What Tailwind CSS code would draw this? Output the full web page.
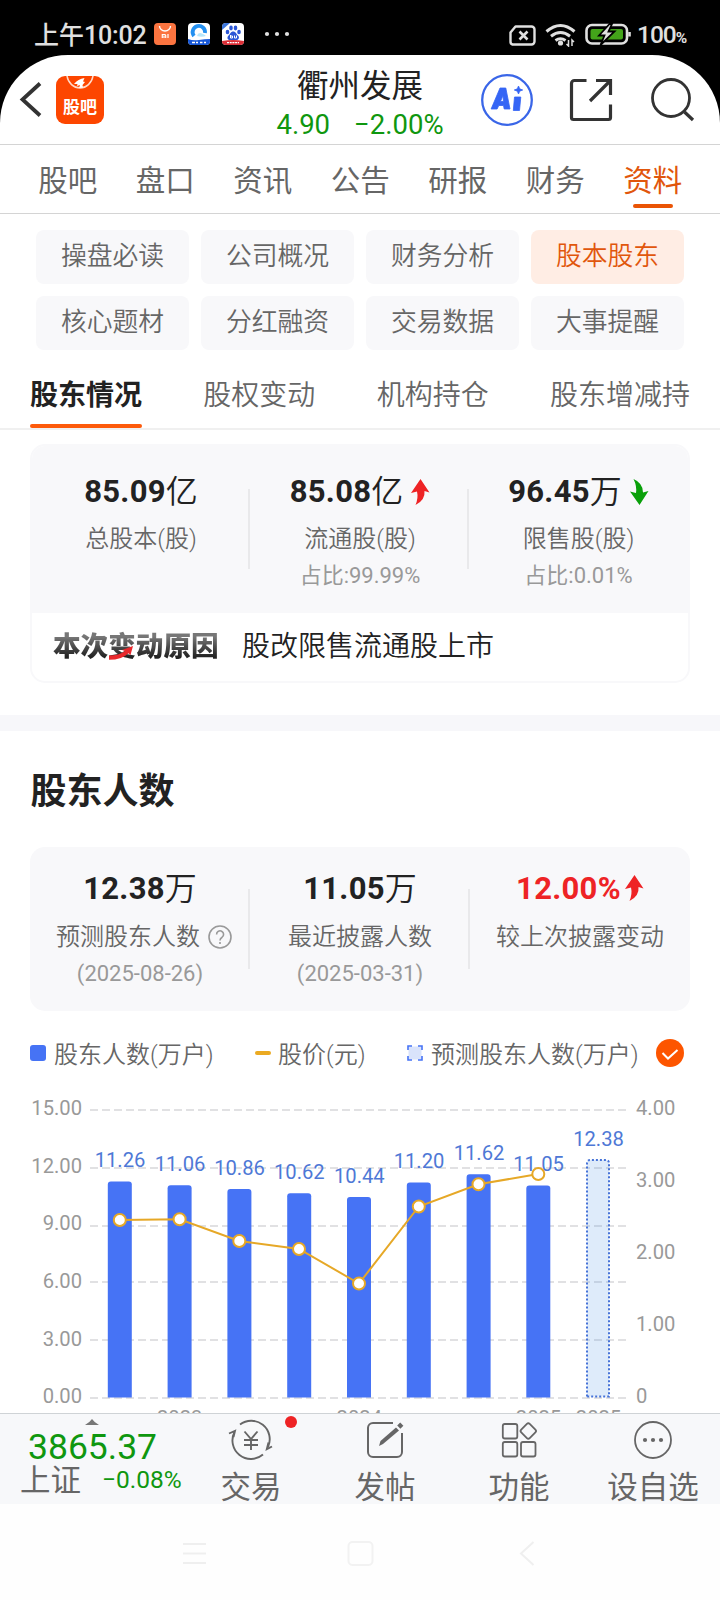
<!DOCTYPE html>
<html lang="zh-CN">
<head>
<meta charset="utf-8">
<title>衢州发展 - 股本股东</title>
<script src="https://cdn.jsdelivr.net/npm/@tailwindcss/browser@4"></script>
</head>
<body class="bg-black">
<div class="w-[720px] h-[1600px] overflow-hidden flex flex-col font-['Roboto','Noto_Sans_CJK_SC',sans-serif] text-[#666]">

  <!-- status bar -->
  <div class="h-[55px] shrink-0 bg-black flex items-start pt-[15px] pl-[34px] text-[#e0e0e0]">
    <div class="w-[120px] h-[40px] leading-[41px] whitespace-nowrap flex"><span class="text-[25px] font-medium">上午</span><span class="text-[25px] font-medium tracking-[-0.2px]">10:02</span></div>
    <svg class="mt-[8px] w-[22px] h-[22px]" viewBox="0 0 22 22"><rect width="22" height="22" rx="4" fill="#fb7440"/><path d="M5.5 3a5.5 5 0 0 0 11 0" fill="none" stroke="#fff" stroke-width="1.4"/><path d="M8.300 15v-3.500h2.400a1 1 0 0 1 1 1v2.500M10 12.500v2.500M14 11v4" fill="none" stroke="#fff" stroke-width="1.200"/></svg>
    <svg class="mt-[8px] ml-[12px] w-[22px] h-[22px]" viewBox="0 0 22 22"><rect width="22" height="22" rx="4" fill="#fff"/><path d="M0 16q5 2 11 1t11-1v2a4 4 0 0 1-4 4H4a4 4 0 0 1-4-4z" fill="#1657d8"/><path d="M6 13a6.200 6.200 0 1 1 11-3" fill="none" stroke="#2490f0" stroke-width="3.800"/><path d="M9 13q1-4 5-2.500 3 1 4 2.500-4 1.500-9 0z" fill="#b6e6fb"/><path d="M4 19.500h3M8 19.500h2M12 19.500h2.500M16 19.500h2" stroke="#fff" stroke-width="1.600"/></svg>
    <svg class="mt-[8px] ml-[12px] w-[22px] h-[22px]" viewBox="0 0 22 22"><rect width="22" height="22" rx="4" fill="#fff"/><path d="M0 7V4a4 4 0 0 1 4-4h4z" fill="#3c76dc"/><g fill="#2b56d6"><ellipse cx="5.500" cy="9" rx="1.800" ry="2.300"/><ellipse cx="9" cy="5" rx="1.800" ry="2.400"/><ellipse cx="13.500" cy="5" rx="1.800" ry="2.400"/><ellipse cx="17" cy="9" rx="1.800" ry="2.300"/><path d="M11.200 8.500c2.500 0 3 2.500 4.800 4 2 2 .5 5-2 4.500h-5.500c-3 .5-4-2.500-2-4.500 1.800-1.500 2.200-4 4.700-4z"/></g><path d="M0 18q11-2 22 0a4 4 0 0 1-4 4H4a4 4 0 0 1-4-4z" fill="#dc3038"/><path d="M8.500 12v3h2v-2h-2M12.500 12.500v2.500h2v-2.500" fill="none" stroke="#fff" stroke-width="1"/><path d="M5 19.700h12" stroke="#fff" stroke-width="1.300" stroke-dasharray="2 .7"/></svg>
    <svg class="mt-[15px] ml-[20px] w-[27px] h-[8px]" viewBox="0 0 27 8" fill="#e0e0e0"><circle cx="3" cy="4" r="2.100"/><circle cx="13" cy="4" r="2.100"/><circle cx="23" cy="4" r="2.100"/></svg>
    <svg class="ml-[217px] mt-[8px] w-[124px] h-[24px]" viewBox="508 23 124 24" fill="none">
      <path d="M515.500 26.500h16a3 3 0 0 1 3 3v12a3 3 0 0 1-3 3h-19a3 3 0 0 1-2-3v-9z" stroke="#e0e0e0" stroke-width="2.400" stroke-linejoin="round"/><path d="M519.500 31.500l8 8m0-8l-8 8" stroke="#e0e0e0" stroke-width="2.600"/>
      <g stroke="#e0e0e0" stroke-width="3"><path d="M546.500 31.500q14-12 28 0"/><path d="M551 36.200q9.500-7.500 19 0"/><path d="M555.500 40.500q5-3.500 10 0"/></g><circle cx="560.500" cy="43" r="2.600" fill="#e0e0e0"/>
      <path d="M568.500 40v6l-2-2M572 46v-6l2 2" stroke="#e0e0e0" stroke-width="1.500"/>
      <rect x="586.500" y="25" width="40.500" height="18.500" rx="5.500" stroke="#e0e0e0" stroke-width="2.600"/><rect x="590.500" y="29" width="32.500" height="10.500" rx="2" fill="#43a41a"/><path d="M609.500 24l-10.500 11.500h5.500l-4 9.500 14-13.500h-6l3.500-7.500z" fill="#e0e0e0" stroke="#000" stroke-width="1.800"/><path d="M629.500 32v4.500" stroke="#e0e0e0" stroke-width="2.600"/>
    </svg>
    <div class="ml-[5px] h-[40px] leading-[40px] text-[24.500px] font-medium whitespace-nowrap tracking-[-1px]">100<span class="text-[15.500px] font-bold">%</span></div>
  </div>

  <!-- app -->
  <div class="bg-white rounded-t-[68px] flex flex-col shrink-0 h-[1358px] overflow-hidden">
    <div class="h-[90px] shrink-0 flex border-b border-[#d4d4d4]">
      <div class="w-[240px] flex items-start pl-[18px] pt-[21px]">
        <svg class="mt-[4px] w-[26px] h-[40px]" viewBox="18 80 26 40" fill="none"><path d="M40 83.500L22.500 99.500 40 115.500" stroke="#333" stroke-width="3.800"/></svg>
        <div class="ml-[12px] w-[48px] h-[48px] rounded-[9px] bg-[#fd4600] overflow-hidden flex flex-col items-center">
          <svg class="w-[30px] h-[18px] shrink-0" viewBox="0 0 30 18"><path d="M2 0a13.200 14.500 0 0 0 26 0" fill="none" stroke="#ffd9c8" stroke-width="1.500"/><path d="M9 8q4-5 10.500-6l-1.500 3.500 2 .5-2.500 3 .5 2.500-4 .5 1-3-3 1 .5-2z" fill="#fff"/></svg>
          <span class="mt-[2px] text-[17px] leading-[20px] font-bold text-white font-['Noto_Sans_CJK_SC',sans-serif]">股吧</span>
        </div>
      </div>
      <div class="w-[240px] flex flex-col items-center">
        <div class="mt-[9px] h-[42px] leading-[46px] text-[31.500px] text-[#222] whitespace-nowrap">衢州发展</div>
        <div class="h-[36px] leading-[37px] text-[27.500px] text-[#0f970f] flex gap-[24px] whitespace-nowrap"><span>4.90</span><span>−2.00%</span></div>
      </div>
      <svg class="w-[240px] h-[89px]" viewBox="480 55 240 89" fill="none">
        <circle cx="507" cy="100" r="24.800" stroke="#3a66e8" stroke-width="2.300"/>
        <path fill="#3565f5" fill-rule="evenodd" stroke="#3565f5" stroke-width=".8" stroke-linejoin="round" d="M500 88h5.800l4.200 21h-5.800l-.7-3.500h-4.700l-1.700 3.500h-6zM503 95.500l-2.500 6h2.900zM514.500 97h6.300l-1.300 13.500h-6.200zM518.500 86l1.200 2.800 3 1.200-3 1.200-1.200 2.800-1.200-2.800-3-1.200 3-1.200z"/>
        <g stroke="#333" stroke-width="3.200"><path d="M586.500 80.500h-12a3 3 0 0 0-3 3v34a2 2 0 0 0 2 2h35a2 2 0 0 0 2-2V104.500M596 80.500h14.500v14.500M609 82L590 101"/></g>
        <circle cx="671" cy="98" r="18.500" stroke="#333" stroke-width="2.800"/><path d="M684.500 112l8.500 8" stroke="#333" stroke-width="3.200"/>
      </svg>
    </div>

    <div class="h-[69px] shrink-0 border-b border-[#d4d4d4] pl-[19px] pr-[18.500px] grid grid-cols-7 text-[29.500px] leading-[72px] text-center whitespace-nowrap">
      <div>股吧</div><div>盘口</div><div>资讯</div><div>公告</div><div>研报</div><div>财务</div>
      <div class="text-[#e1560c] flex flex-col items-center"><span class="h-[58.500px]">资料</span><i class="block w-[40px] h-[4.500px] rounded-full bg-[#ea5405]"></i></div>
    </div>

    <div class="pt-[16px] px-[36px] grid grid-cols-4 gap-3 shrink-0 text-center text-[25.800px] leading-[53px] font-[350] *:h-[54px] *:rounded-lg *:bg-[#f8f8fa]">
      <div>操盘必读</div><div>公司概况</div><div>财务分析</div><div class="bg-[#ffede4]! text-[#e1560c]">股本股东</div>
      <div>核心题材</div><div>分红融资</div><div>交易数据</div><div>大事提醒</div>
    </div>

    <div class="h-[80px] shrink-0 border-b-2 border-[#f0f0f0] px-[30px] flex gap-[61.300px] text-[28px] whitespace-nowrap font-[350]">
      <div class="font-bold text-[#222] flex flex-col"><span class="h-[74px] leading-[92px]">股东情况</span><i class="block h-[4px] rounded-sm bg-[#fd5a0b]"></i></div>
      <div class="leading-[92px]">股权变动</div><div class="leading-[92px]">机构持仓</div><div class="leading-[92px]">股东增减持</div>
    </div>

    <div class="mt-[14px] mx-[30px] h-[239px] shrink-0 border-2 border-[#f8f8fa] rounded-[15px] overflow-hidden flex flex-col">
      <div class="h-[167px] bg-[#f8f8fa] grid grid-cols-[218px_218px_220px] text-center">
        <div class="relative">
          <div class="mt-[24px] h-[44px] leading-[44px] text-[31px] text-[#222] flex justify-center"><b class="tracking-[0.3px]">85.09</b><span class="text-[32px] font-[350]">亿</span></div>
          <div class="mt-[8px] h-[36px] leading-[35px] text-[24px] font-[350]">总股本(股)</div>
          <i class="absolute right-0 top-[43px] w-[2px] h-[80px] bg-[#e9e9eb]"></i>
        </div>
        <div class="relative pl-[2px]">
          <div class="mt-[24px] h-[44px] leading-[44px] text-[31px] text-[#222] flex justify-center items-center"><b class="tracking-[0.3px]">85.08</b><span class="text-[32px] font-[350]">亿</span><svg class="ml-[8px] w-[19px] h-[26px]" viewBox="0 0 19 26"><path d="M9.500 0L18.500 13.500 13.500 12q1 9-9 14 3-7 1.500-13.500L0 14z" fill="#ee2325"/></svg></div>
          <div class="mt-[8px] h-[36px] leading-[35px] text-[24px] font-[350]">流通股(股)</div>
          <div class="h-[36px] leading-[36px] text-[22px] text-[#999]">占比:99.99%</div>
          <i class="absolute right-[-1px] top-[43px] w-[2px] h-[80px] bg-[#e9e9eb]"></i>
        </div>
        <div class="pl-[1px]">
          <div class="mt-[24px] h-[44px] leading-[44px] text-[31px] text-[#222] flex justify-center items-center"><b class="tracking-[0.3px]">96.45</b><span class="text-[32px] font-[350]">万</span><svg class="ml-[8px] w-[19px] h-[26px]" viewBox="0 0 19 26"><path d="M9.500 26L0 12.500 6 14Q7 7 3.500 0 13 4 13 13.500L18.500 12z" fill="#0aa00a"/></svg></div>
          <div class="mt-[8px] h-[36px] leading-[35px] text-[24px] font-[350]">限售股(股)</div>
          <div class="h-[36px] leading-[36px] text-[22px] text-[#999]">占比:0.01%</div>
        </div>
      </div>
      <div class="h-[68px] pl-[21px] flex leading-[68px] whitespace-nowrap">
        <div class="relative w-[189px]"><span class="inline-block text-[27.600px] font-black bg-linear-to-b from-[#777] from-35% to-[#222] to-65% bg-clip-text text-transparent">本次变动原因</span>
          <svg class="absolute left-[56px] top-[33px] w-[25px] h-[14px]" viewBox="0 0 25 14"><path d="M0 9.500q10 0 16-4.500L13 4 24 0 21.500 9l-2-1.800Q13 13.800 0 13.800z" fill="#e8282c"/></svg>
        </div>
        <div class="text-[28px] text-[#222] font-[350]">股改限售流通股上市</div>
      </div>
    </div>

    <div class="mt-[32px] h-[16px] shrink-0 bg-[#f7f7fa]"></div>

    <div class="mt-[31px] ml-[30.500px] h-[60px] leading-[60px] shrink-0 text-[36px] font-bold text-[#222]">股东人数</div>

    <div class="mt-[25px] mx-[30px] h-[164px] shrink-0 rounded-[15px] bg-[#f8f8fa] grid grid-cols-[220px_220px_220px] text-center">
      <div class="relative">
        <div class="mt-[20px] h-[44px] leading-[44px] text-[31px] text-[#222] flex justify-center"><b class="tracking-[0.3px]">12.38</b><span class="text-[32px] font-[350]">万</span></div>
        <div class="mt-[8px] h-[36px] leading-[36px] text-[24px] flex items-center pl-[26px] whitespace-nowrap font-[350]">预测股东人数<svg class="ml-[8px] w-[24px] h-[24px]" viewBox="0 0 24 24" fill="none" stroke="#999" stroke-width="1.600"><circle cx="12" cy="12" r="11"/><path d="M8.600 9.500a3.500 3.500 0 1 1 5.500 2.700Q12 13.500 12 15.500M12 17v2"/></svg></div>
        <div class="h-[40px] leading-[38px] text-[22px] text-[#999]">(2025-08-26)</div>
        <i class="absolute right-0 top-[42px] w-[2px] h-[80px] bg-[#e9e9eb]"></i>
      </div>
      <div class="relative">
        <div class="mt-[20px] h-[44px] leading-[44px] text-[31px] text-[#222] flex justify-center"><b class="tracking-[0.3px]">11.05</b><span class="text-[32px] font-[350]">万</span></div>
        <div class="mt-[8px] h-[36px] leading-[36px] text-[24px] font-[350]">最近披露人数</div>
        <div class="h-[40px] leading-[38px] text-[22px] text-[#999]">(2025-03-31)</div>
        <i class="absolute right-0 top-[42px] w-[2px] h-[80px] bg-[#e9e9eb]"></i>
      </div>
      <div>
        <div class="mt-[20px] h-[44px] leading-[44px] text-[31px] text-[#ee2325] flex justify-center items-center"><b class="tracking-[0.3px]">12.00%</b><svg class="ml-[4px] mb-[2px] w-[19px] h-[26px]" viewBox="0 0 19 26"><path d="M9.500 0L18.500 13.500 13.500 12q1 9-9 14 3-7 1.500-13.500L0 14z" fill="#ee2325"/></svg></div>
        <div class="mt-[8px] h-[36px] leading-[36px] text-[24px] font-[350]">较上次披露变动</div>
      </div>
    </div>

    <!-- legend -->
    <div class="mt-[22px] h-[40px] shrink-0 pl-[30px] flex items-center text-[24px] leading-[40px] whitespace-nowrap font-[350] *:shrink-0">
      <i class="w-[16px] h-[16px] rounded-[3px] bg-[#4673f5]"></i><span class="ml-[8px] mt-[3px] w-[201px]">股东人数(万户)</span>
      <i class="w-[16px] h-[4px] rounded-full bg-[#ebaa22]"></i><span class="ml-[7px] mt-[3px] w-[129px]">股价(元)</span>
      <svg class="w-[16px] h-[16px]" viewBox="0 0 16 16"><rect x="1.500" y="1.500" width="13" height="13" fill="#d9e3fb"/><path d="M1 5V1h4M11 1h4v4M15 11v4h-4M5 15H1v-4" fill="none" stroke="#4673f5" stroke-width="1.600"/></svg>
      <span class="ml-[8px] mt-[3px] w-[225px]">预测股东人数(万户)</span>
      <svg class="w-[28px] h-[28px]" viewBox="0 0 28 28"><circle cx="14" cy="14" r="14" fill="#fd5500"/><path d="M6.500 14l5.500 5.500 9.500-8.500" fill="none" stroke="#fff" stroke-width="2"/></svg>
    </div>

    <!-- chart -->
    <svg class="w-[720px] h-[340px] shrink-0" viewBox="0 1073 720 340" font-family="Roboto, sans-serif" font-size="20.200">
      <path d="M90 1110H626M90 1168H626M90 1226H626M90 1282H626M90 1340H626M90 1398H626" stroke="#e1e1e3" stroke-width="2" stroke-dasharray="8 4"/>
      <g fill="#4673f5">
        <path d="M107.800 1397.500V1184.500a3 3 0 0 1 3-3h18a3 3 0 0 1 3 3v213z"/>
        <path d="M167.600 1397.500V1188.300a3 3 0 0 1 3-3h18a3 3 0 0 1 3 3v209.200z"/>
        <path d="M227.400 1397.500V1192a3 3 0 0 1 3-3h18a3 3 0 0 1 3 3v205.500z"/>
        <path d="M287.200 1397.500V1196.300a3 3 0 0 1 3-3h18a3 3 0 0 1 3 3v201.200z"/>
        <path d="M347 1397.500V1200a3 3 0 0 1 3-3h18a3 3 0 0 1 3 3v197.500z"/>
        <path d="M406.800 1397.500V1185.500a3 3 0 0 1 3-3h18a3 3 0 0 1 3 3v212z"/>
        <path d="M466.600 1397.500V1177.300a3 3 0 0 1 3-3h18a3 3 0 0 1 3 3v220.200z"/>
        <path d="M526.300 1397.500V1188.500a3 3 0 0 1 3-3h18a3 3 0 0 1 3 3v209z"/>
      </g>
      <path d="M587 1396.500V1163a3 3 0 0 1 3-3h16a3 3 0 0 1 3 3v233.500z" fill="#4a90e2" fill-opacity=".18" stroke="#4673d8" stroke-width="2" stroke-dasharray="2 2"/>
      <g fill="#4e78d6" text-anchor="middle">
        <text x="120" y="1167.300">11.26</text><text x="180" y="1171">11.06</text><text x="239.500" y="1175">10.86</text><text x="299.300" y="1179">10.62</text><text x="359.300" y="1183">10.44</text><text x="419" y="1168">11.20</text><text x="479" y="1160">11.62</text><text x="538.500" y="1171">11.05</text><text x="598.500" y="1146.300">12.38</text>
      </g>
      <path d="M119.800 1220L179.600 1219.300 239.300 1241 299 1249 359 1283.500 418.800 1206.500 478.500 1184.300 538.300 1174" fill="none" stroke="#e6a827" stroke-width="2"/>
      <g fill="#fff" stroke="#e6a827" stroke-width="2"><circle cx="119.800" cy="1220" r="6"/><circle cx="179.600" cy="1219.300" r="6"/><circle cx="239.300" cy="1241" r="6"/><circle cx="299" cy="1249" r="6"/><circle cx="359" cy="1283.500" r="6"/><circle cx="418.800" cy="1206.500" r="6"/><circle cx="478.500" cy="1184.300" r="6"/><circle cx="538.300" cy="1174" r="6"/></g>
      <g fill="#999" text-anchor="end"><text x="82" y="1114.700">15.00</text><text x="82" y="1172.700">12.00</text><text x="82" y="1229.700">9.00</text><text x="82" y="1288">6.00</text><text x="82" y="1345.600">3.00</text><text x="82" y="1402.700">0.00</text></g>
      <g fill="#999"><text x="636" y="1114.700">4.00</text><text x="636" y="1187">3.00</text><text x="636" y="1259">2.00</text><text x="636" y="1331">1.00</text><text x="636" y="1402.700">0</text></g>
      <g fill="#999" text-anchor="middle"><text x="179.700" y="1424.700">2023</text><text x="359.300" y="1424.700">2024</text><text x="538.500" y="1424.700">2025</text><text x="598.500" y="1424.700">2025</text></g>
    </svg>
  </div>

  <!-- bottom bar -->
  <div class="h-[91px] shrink-0 bg-[#f7f8fa] border-t border-[#cfd3d6] flex overflow-hidden whitespace-nowrap">
    <div class="w-[184px] flex flex-col">
      <svg class="mt-[5px] ml-[85px] w-[14px] h-[6px] shrink-0" viewBox="0 0 14 6"><path d="M0 6Q5 3 7 0q2 3 7 6z" fill="#777"/></svg>
      <div class="pl-[28px] pt-[4px] h-[38px] leading-[36px] text-[35.500px] text-[#0f970f]">3865.37</div>
      <div class="pl-[20px] flex h-[36px] leading-[36px]"><span class="text-[30.500px]">上证</span><span class="ml-[21px] text-[24.500px] text-[#0f970f] leading-[34px]">−0.08%</span></div>
    </div>
    <div class="w-[134px] flex flex-col items-center relative">
      <svg class="mt-[5px] w-[46px] h-[42px] shrink-0" viewBox="228 1419 46 42" fill="none" stroke="#666" stroke-width="1.900"><path d="M240 1424.500A18.500 18.500 0 0 1 268 1447M263 1454.500A18.500 18.500 0 0 1 234.500 1432M229 1433.500L235 1430.800 233.500 1437M272 1446.500L266.800 1449.200 268.500 1442.500"/><path d="M244.500 1431.500l6.500 7.500 6.500-7.500M251 1439v11M244 1440h14M244 1445h14"/></svg>
      <span class="h-[44px] leading-[54px] text-[30.500px]">交易</span>
      <i class="absolute right-[21px] top-[2px] w-[12px] h-[12px] rounded-full bg-[#ee2325]"></i>
    </div>
    <div class="w-[134px] flex flex-col items-center">
      <svg class="mt-[5px] w-[46px] h-[42px] shrink-0" viewBox="362 1419 46 42" fill="none" stroke="#666" stroke-width="2"><path d="M393 1423H373a5 5 0 0 0-5 5v24a5 5 0 0 0 5 5h24a5 5 0 0 0 5-5V1433"/><path d="M379 1446l1.500-5L396 1427.500l3 3L383 1444z" fill="#666" stroke="none"/><path d="M398.800 1427.200l3-3" stroke-width="4.500"/></svg>
      <span class="h-[44px] leading-[54px] text-[30.500px]">发帖</span>
    </div>
    <div class="w-[134px] flex flex-col items-center">
      <svg class="mt-[5px] w-[46px] h-[42px] shrink-0" viewBox="496 1419 46 42" fill="none" stroke="#666" stroke-width="1.800"><rect x="502.800" y="1424" width="14.500" height="14.500" rx="2"/><rect x="502.800" y="1442" width="14.500" height="14.500" rx="2"/><rect x="521" y="1442" width="14.500" height="14.500" rx="2"/><rect x="522.300" y="1425" width="12" height="12" rx="2" transform="rotate(45 528.300 1431)"/></svg>
      <span class="h-[44px] leading-[54px] text-[30.500px]">功能</span>
    </div>
    <div class="w-[134px] flex flex-col items-center">
      <svg class="mt-[5px] w-[46px] h-[42px] shrink-0" viewBox="630 1419 46 42" fill="none" stroke="#666" stroke-width="1.800"><circle cx="653" cy="1440" r="18"/><g fill="#666" stroke="none"><circle cx="645" cy="1440" r="2.100"/><circle cx="653" cy="1440" r="2.100"/><circle cx="661" cy="1440" r="2.100"/></g></svg>
      <span class="h-[44px] leading-[54px] text-[30.500px]">设自选</span>
    </div>
  </div>

  <!-- system navigation -->
  <div class="h-[96px] shrink-0 bg-[#fefefe] flex">
    <svg class="w-[720px] h-[96px]" viewBox="0 1504 720 96" fill="none" stroke="#efefef" stroke-width="2"><path d="M183 1544h23M183 1553.500h23M183 1563h23"/><rect x="348.500" y="1542" width="24" height="23" rx="4" stroke="#f2f2f2"/><path d="M533.500 1542L521 1553.500l12.500 11.500"/></svg>
  </div>
</div>
</body>
</html>
